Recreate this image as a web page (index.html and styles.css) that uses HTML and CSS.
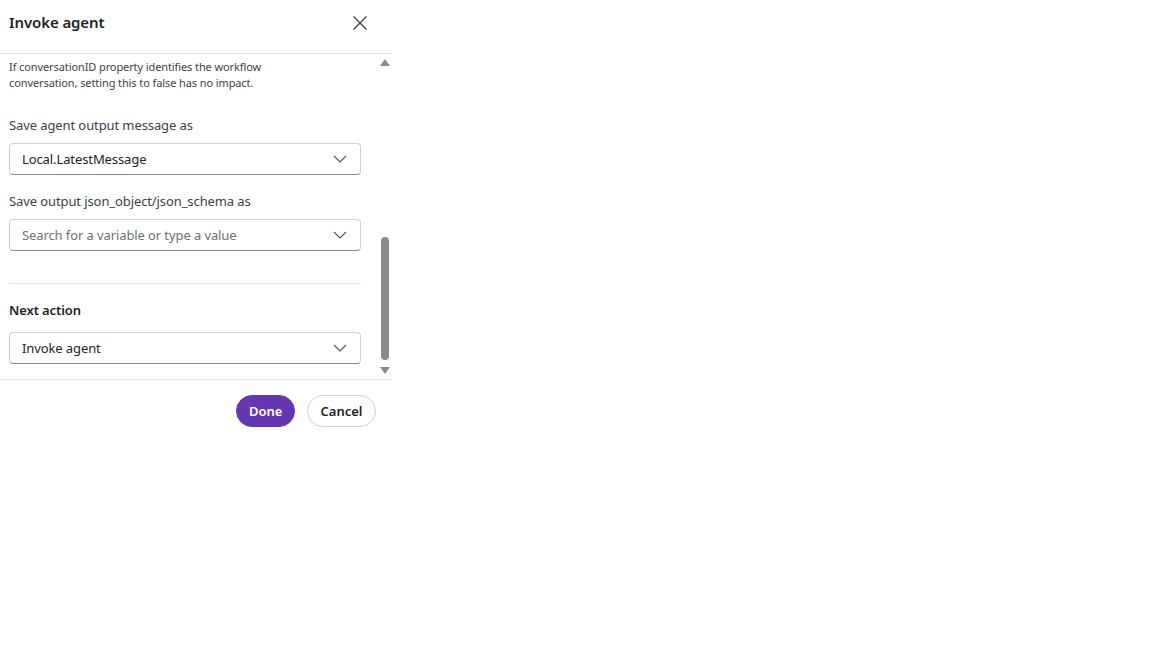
FILE: index.html
```html
<!DOCTYPE html>
<html>
<head>
<meta charset="utf-8">
<link rel="stylesheet" href="styles.css">
</head>
<body>
<div class="panel">
  <header class="header">
    <h1 class="title">Invoke agent</h1>
    <button class="close" aria-label="Close">
      <svg width="16" height="16" viewBox="0 0 16 16"><path d="M1.5 1.5 L14.5 14.5 M14.5 1.5 L1.5 14.5" stroke="#444" stroke-width="1.4" fill="none"/></svg>
    </button>
  </header>
  <div class="body">
    <div class="content">
      <p class="desc">If conversationID property identifies the workflow conversation, setting this to false has no impact.</p>
      <div class="field">
        <label class="label">Save agent output message as</label>
        <div class="select">
          <span class="value">Local.LatestMessage</span>
          <svg class="chev" width="14" height="8" viewBox="0 0 14 8"><path d="M1 1 L7 7 L13 1" stroke="#555" stroke-width="1.2" fill="none"/></svg>
        </div>
      </div>
      <div class="field">
        <label class="label">Save output json_object/json_schema as</label>
        <div class="select">
          <span class="value placeholder">Search for a variable or type a value</span>
          <svg class="chev" width="14" height="8" viewBox="0 0 14 8"><path d="M1 1 L7 7 L13 1" stroke="#555" stroke-width="1.2" fill="none"/></svg>
        </div>
      </div>
      <hr class="sep">
      <div class="field next">
        <label class="label strong">Next action</label>
        <div class="select">
          <span class="value">Invoke agent</span>
          <svg class="chev" width="14" height="8" viewBox="0 0 14 8"><path d="M1 1 L7 7 L13 1" stroke="#555" stroke-width="1.2" fill="none"/></svg>
        </div>
      </div>
    </div>
    <div class="scrollbar">
      <span class="arrow up"></span>
      <div class="track"><div class="thumb"></div></div>
      <span class="arrow down"></span>
    </div>
  </div>
  <footer class="footer">
    <button class="btn primary">Done</button>
    <button class="btn secondary">Cancel</button>
  </footer>
</div>
</body>
</html>
```
FILE: styles.css
```css
* { box-sizing: border-box; }
html, body { margin: 0; padding: 0; background: #fff; }
body {
  font-family: "Noto Sans", "Open Sans", sans-serif;
  color: #242424;
  width: 1152px;
  height: 648px;
}
.panel {
  width: 392px;
  display: flex;
  flex-direction: column;
}
.header {
  height: 54px;
  display: flex;
  align-items: flex-start;
  justify-content: space-between;
  padding: 11px 24px 0 9px;
  border-bottom: 1px solid #e3e3e3;
}
.title {
  margin: 0;
  font-size: 15px;
  font-weight: 600;
  line-height: 22px;
  color: #242424;
  letter-spacing: -0.1px;
}
.close {
  border: 0;
  background: none;
  padding: 0;
  margin-top: 4px;
  width: 16px;
  height: 16px;
  display: flex;
}
.body {
  height: 326px;
  display: flex;
  border-bottom: 1px solid #e3e3e3;
}
.content {
  width: 361px;
  padding: 5px 0 0 9px;
  display: flex;
  flex-direction: column;
}
.desc {
  margin: 0;
  font-size: 11px;
  line-height: 16px;
  color: #424242;
  width: 270px;
  letter-spacing: -0.1px;
}
.field {
  display: flex;
  flex-direction: column;
}
.desc + .field { margin-top: 24px; }
.field + .field { margin-top: 16px; }
.label {
  font-size: 13px;
  line-height: 20px;
  color: #424242;
  margin-bottom: 8px;
  letter-spacing: -0.1px;
}
.label.strong {
  font-weight: 600;
  color: #242424;
  margin-bottom: 12px;
}
.select {
  height: 32px;
  border: 1px solid #d1d1d1;
  border-bottom-color: #8a8a8a;
  border-radius: 4px;
  display: flex;
  align-items: center;
  justify-content: space-between;
  padding: 0 13px 0 12px;
}
.value {
  font-size: 13px;
  color: #242424;
  letter-spacing: -0.1px;
}
.value.placeholder { color: #707070; }
.sep {
  margin: 32px 0 0;
  border: 0;
  border-top: 1px solid #e3e3e3;
  height: 0;
}
.field.next { margin-top: 16px; }
.scrollbar {
  width: 31px;
  display: flex;
  flex-direction: column;
  align-items: center;
  padding: 5px 0 5px 17px;
}
.arrow {
  width: 0;
  height: 0;
  border-left: 5px solid transparent;
  border-right: 5px solid transparent;
}
.arrow.up { border-bottom: 7px solid #8a8a8a; }
.arrow.down { border-top: 7px solid #8a8a8a; }
.track {
  flex: 1;
  display: flex;
  flex-direction: column;
  justify-content: flex-end;
  padding: 0 0 7px;
}
.thumb {
  width: 8px;
  height: 123px;
  background: #8a8a8a;
  border-radius: 4px;
}
.footer {
  display: flex;
  justify-content: flex-end;
  gap: 12px;
  padding: 15px 16px 0 0;
}
.btn {
  height: 32px;
  border-radius: 16px;
  font-family: inherit;
  font-size: 13px;
  font-weight: 600;
  padding: 0 12px;
}
.btn.primary {
  background: #6237b0;
  color: #fff;
  border: 1px solid #6237b0;
  width: 59px;
}
.btn.secondary {
  background: #fff;
  color: #242424;
  border: 1px solid #d1d1d1;
  width: 69px;
}
```
